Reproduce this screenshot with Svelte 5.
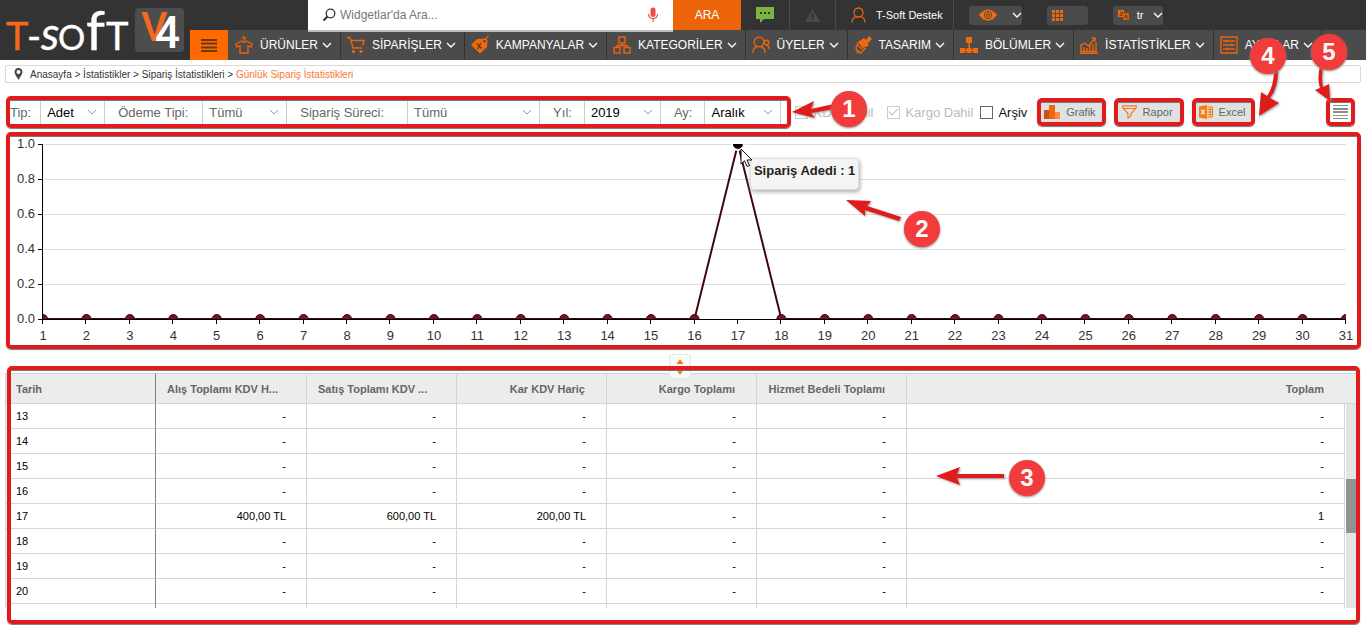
<script>
  const nav = [
    { label: 'ÜRÜNLER', icon: 'shirt' },
    { label: 'SİPARİŞLER', icon: 'cart' },
    { label: 'KAMPANYALAR', icon: 'tag' },
    { label: 'KATEGORİLER', icon: 'boxes' },
    { label: 'ÜYELER', icon: 'users' },
    { label: 'TASARIM', icon: 'brush' },
    { label: 'BÖLÜMLER', icon: 'tree' },
    { label: 'İSTATİSTİKLER', icon: 'stats' },
    { label: 'AYARLAR', icon: 'sliders' }
  ];

  const filters = [
    { id: 'tip', label: 'Tip:', value: 'Adet', size: 'w63', strong: true },
    { id: 'odeme', label: 'Ödeme Tipi:', value: 'Tümü', size: 'w83' },
    { id: 'surec', label: 'Sipariş Süreci:', value: 'Tümü', size: 'w131' },
    { id: 'yil', label: 'Yıl:', value: '2019', size: 'w75', strong: true },
    { id: 'ay', label: 'Ay:', value: 'Aralık', size: 'w75', strong: true }
  ];

  const checks = [
    { id: 'kdv', label: 'KDV Dahil', checked: true, disabled: true },
    { id: 'kargo', label: 'Kargo Dahil', checked: true, disabled: true },
    { id: 'arsiv', label: 'Arşiv', checked: false, disabled: false }
  ];

  const columns = [
    { label: 'Alış Toplamı KDV H...', cut: true },
    { label: 'Satış Toplamı KDV ...', cut: true },
    { label: 'Kar KDV Hariç' },
    { label: 'Kargo Toplamı' },
    { label: 'Hizmet Bedeli Toplamı' },
    { label: 'Toplam' }
  ];
  const empty = ['-', '-', '-', '-', '-', '-'];
  const rows = [13, 14, 15, 16, 17, 18, 19, 20].map((day) => ({
    day,
    cells: day === 17 ? ['400,00 TL', '600,00 TL', '200,00 TL', '-', '-', '1'] : empty
  }));

  // Orders per day of the month
  const orders = Array.from({ length: 31 }, (_, i) => (i + 1 === 17 ? 1 : 0));
  const levels = [1, 0.8, 0.6, 0.4, 0.2, 0];
  const left = 33;
  const top = 8;
  const plot = 175;
  let width = $state(1347);
  const step = $derived((width - left - 11) / 30);
  const px = (i) => left + i * step;
  const py = (v) => top + (1 - v) * plot;
</script>

{#snippet chevron()}
  <svg class="chev" viewBox="0 0 10 6" aria-hidden="true"><path d="M1 1l4 4 4-4" /></svg>
{/snippet}

{#snippet navIcon(name)}
  <svg class="ico" viewBox="0 0 18 18" aria-hidden="true">
    {#if name === 'shirt'}
      <path d="M9 5V3.600c1.800-.6 1.200-2.600-.1-2.600-1 0-1.400.6-1.400 1.300M6.500 5L.8 8l1.200 2.800 3-1V17h8V9.800l3 1L17.200 8l-5.700-3L9 6.500z" />
    {:else if name === 'cart'}
      <path d="M0 1.500h3l3 10.500h9M4.500 4.500H17l-1.500 5" />
      <circle class="solid" cx="6.500" cy="15.500" r="1.500" /><circle class="solid" cx="14" cy="15.500" r="1.500" />
    {:else if name === 'tag'}
      <path class="solid" d="M0 9l6-6 9-.5 1.500 2L16 11l-7 6.500z" />
      <path d="M13 4.500L17.500 0" />
      <path class="cut" d="M6 7.500l4.500 5M10 7l-3.500 6" />
      <circle class="hole" cx="13.500" cy="5.200" r="1.300" />
    {:else if name === 'boxes'}
      <path d="M6 1h6v6H6zM1 11.500h6V17H1zM11 11.500h6V17h-6zM9 7v2.500M4 11.500v-2h10v2" />
    {:else if name === 'users'}
      <circle cx="7" cy="6" r="4.800" /><path d="M.8 17c0-3.500 1.500-5.500 4-6.500M13.200 17c0-3.500-1.500-5.500-4-6.500" />
      <circle cx="14.500" cy="6.500" r="2.200" /><path d="M14 9c2 .5 3.300 2 3.300 4.500" />
    {:else if name === 'brush'}
      <path class="solid" d="M4 6l6-4 2 2 3-4 3 3-4 4 .5 3-6 2z" />
      <path d="M4 6.500L2 12l1.500 4.500 1.200-1.500 1.800 2.500 5-5.500M3 8.500l5.500 5" />
    {:else if name === 'tree'}
      <path class="solid" d="M6 1h6v6H6zM8.500 7h1.500v6H8.500zM0 12h5v5H0zM6.500 12h5v5h-5zM13 12h5v5h-5zM2 13.500h14v1.500H2z" />
    {:else if name === 'stats'}
      <path d="M1 8v7.500h15V6M4 15v-4M7 15v-3M10 15V9.500M13 15V8M1 9.500L4.500 7l4 3L15 2.500M11.500 2H15v3.500M0 17.300h18" />
    {:else}
      <path d="M1 1h16v16H1zM3 5h12M3 9h12M3 13h12M6 3.500v3M12 7.500v3M7 11.500v3" />
    {/if}
  </svg>
{/snippet}

<div class="page">
  <header>
    <a class="logo" href="#home" aria-label="T-soft V4">
      <svg viewBox="0 0 190 60">
        <g class="word">
          <text class="hot" x="6" y="50" font-size="38">T</text>
          <text x="27" y="50" font-size="38">-</text>
          <text class="slant" x="41" y="50" font-size="46">s</text>
          <text x="58" y="50" font-size="34">O</text>
          <text x="86" y="50" font-size="54">f</text>
          <text x="106" y="50" font-size="38">T</text>
        </g>
        <rect x="135" y="8" width="49" height="44" rx="4" fill="#4d4d4d" />
        <g class="mark">
          <text class="hot" x="141" y="41" font-size="41">V</text>
          <text x="155" y="48" font-size="44">4</text>
        </g>
      </svg>
    </a>

    <div class="topbar">
      <form class="search" role="search">
        <label for="q">
          <svg width="14" height="14" viewBox="0 0 14 14" aria-label="Ara">
            <circle cx="8.500" cy="5.500" r="4.300" fill="none" stroke="#333" stroke-width="1.300" />
            <path d="M5.500 8.500L1.500 12.500" stroke="#333" stroke-width="2" />
          </svg>
        </label>
        <input id="q" type="text" placeholder="Widgetlar'da Ara..." />
        <button type="button" class="mic" aria-label="Sesli arama">
          <svg width="12" height="16" viewBox="0 0 12 16">
            <rect x="3.500" y="0.500" width="5" height="9.500" rx="2.500" fill="#f04a4a" />
            <path d="M1.500 7c0 6 9 6 9 0M6 11.500V15" fill="none" stroke="#f04a4a" stroke-width="1.200" />
          </svg>
        </button>
      </form>
      <button type="button" class="go">ARA</button>
      <button type="button" class="cell c48" aria-label="Mesajlar">
        <svg width="18" height="16" viewBox="0 0 18 16">
          <path d="M0 0h18v12H8l-4 4v-4H0z" fill="#7cb342" />
          <path d="M4 5h2v2H4zM8 5h2v2H8zM12 5h2v2h-2z" fill="#2c3e1a" />
        </svg>
      </button>
      <button type="button" class="cell c46" aria-label="Uyarılar">
        <svg width="15" height="13" viewBox="0 0 15 13">
          <path d="M7.500 0L15 13H0z" fill="#4a4a4a" />
          <path d="M6.800 4h1.500v4.500H6.800zM6.800 9.500h1.500V11H6.800z" fill="#2c2c2c" />
        </svg>
      </button>
      <a class="cell support" href="#destek">
        <svg width="15" height="16" viewBox="0 0 15 16" fill="none" stroke="#eb640a" stroke-width="1.300">
          <circle cx="7.500" cy="5.500" r="4.500" /><path d="M1 15.500c0-3 1.500-5 4-6M14 15.500c0-3-1.500-5-4-6" />
        </svg>
        <span>T-Soft Destek</span>
      </a>
      <div class="tools">
        <button type="button" class="tool t53" aria-label="Görünüm">
          <svg width="18" height="12" viewBox="0 0 18 12">
            <path d="M0 6c5-7.500 13-7.500 18 0-5 7.500-13 7.500-18 0z" fill="#f06a0c" />
            <circle cx="9" cy="6" r="3.600" fill="none" stroke="#4b4b4b" /><circle cx="9" cy="6" r="1.400" fill="none" stroke="#4b4b4b" />
          </svg>
          {@render chevron()}
        </button>
        <button type="button" class="tool t41" aria-label="Uygulamalar">
          <svg width="11" height="11" viewBox="0 0 11 11">
            <path d="M0 0h3v3H0zM4 0h3v3H4zM8 0h3v3H8zM0 4h3v3H0zM4 4h3v3H4zM8 4h3v3H8zM0 8h3v3H0zM4 8h3v3H4zM8 8h3v3H8z" fill="#f06a0c" />
          </svg>
        </button>
        <button type="button" class="tool t50">
          <svg width="11" height="10" viewBox="0 0 11 10">
            <path d="M0 0h6v7H0z" fill="#f06a0c" /><path d="M5 3h6v7H5z" fill="#d75a08" />
            <path d="M2 2h2.500v2H2v1.500h2.500M6.500 8.500l1.500-3.500 1.500 3.500" fill="none" stroke="#5a3216" stroke-width=".8" />
          </svg>
          <span>tr</span>
          {@render chevron()}
        </button>
      </div>
    </div>

    <nav>
      <button type="button" class="burger" aria-label="Menü">
        <svg width="16" height="13" viewBox="0 0 16 13"><path d="M0 0h16v2H0zM0 3.500h16v2H0zM0 7.500h16v2H0zM0 11h16v2H0z" fill="#6b3a14" /></svg>
      </button>
      {#each nav as item}
        <a href="#{item.icon}">
          {@render navIcon(item.icon)}
          <span>{item.label}</span>
          {@render chevron()}
        </a>
      {/each}
    </nav>
  </header>

  <main>
    <div class="crumbs">
      <svg width="9" height="12" viewBox="0 0 9 12" aria-hidden="true">
        <path d="M4.500 0C2 0 .5 1.800.5 4c0 2.500 2.500 4.500 4 8 1.500-3.500 4-5.500 4-8 0-2.200-1.500-4-4-4zm0 6a2 2 0 110-4 2 2 0 010 4z" fill="#444" />
      </svg>
      <span><a href="#a">Anasayfa</a> &gt; <a href="#b">İstatistikler</a> &gt; <a href="#c">Sipariş İstatistikleri</a> &gt; <b>Günlük Sipariş İstatistikleri</b></span>
    </div>

    <div class="toolbar">
      <div class="filters framed">
        {#each filters as f}
          <label class="name n-{f.id}" for={f.id}>{f.label}</label>
          <div class="pick {f.size}" class:strong={f.strong}>
            <select id={f.id}><option>{f.value}</option></select>
            {@render chevron()}
          </div>
        {/each}
      </div>
      <div class="checks">
        {#each checks as c}
          <label class:off={c.disabled}>
            <input type="checkbox" checked={c.checked} disabled={c.disabled} />{c.label}
          </label>
        {/each}
      </div>
      <div class="actions">
        <button type="button" class="framed">
          <svg width="17" height="15" viewBox="0 0 17 15"><path d="M0 5h5v9H0z" fill="#c4531a" /><path d="M5 0h6v14H5z" fill="#f2660f" /><path d="M11 7h5v7h-5z" fill="#ff8a45" /></svg>
          Grafik
        </button>
        <button type="button" class="framed">
          <svg width="15" height="14" viewBox="0 0 15 14" fill="none" stroke="#f47a20" stroke-width="1.200"><path d="M.8.8h13.400v2L9 8.500V11l-3 2.200V8.500L.8 2.800zM2 3.500h11" /></svg>
          Rapor
        </button>
        <button type="button" class="framed">
          <svg width="14" height="14" viewBox="0 0 14 14">
            <path d="M0 1.500L8 0v14L0 12.500z" fill="#f47a10" /><path d="M2.200 4.500l3.600 5M5.800 4.500l-3.600 5" stroke="#fff" stroke-width="1.200" />
            <path d="M8.500 2h5v10h-5M8.500 4.500h5M8.500 7h5M8.500 9.500h5M11 2v10" fill="none" stroke="#f47a10" />
          </svg>
          Excel
        </button>
      </div>
      <button type="button" class="list framed" aria-label="Liste">
        <svg width="15" height="14" viewBox="0 0 15 14"><path d="M0 0h15v1H0zM0 3h15v2H0zM0 6h15v2H0zM0 10h15v1H0zM0 13h15v1H0z" fill="#8d8d8d" /></svg>
      </button>
    </div>

    <section class="chart framed" bind:clientWidth={width}>
      <svg width="100%" height="209" role="img" aria-label="Sipariş Adedi">
        <defs>
          <clipPath id="plot"><rect x={left} y={top} width={step * 30} height={plot} /></clipPath>
        </defs>
        {#each levels as v}
          {#if v > 0}<path class="grid" d="M{left} {Math.round(py(v)) + 0.5}H{px(30)}" />{/if}
          <path class="axis" d="M{left - 5} {Math.round(py(v)) + 0.5}H{left}" />
          <text x={left - 8} y={py(v) + 4} text-anchor="end">{v.toFixed(1)}</text>
        {/each}
        <path class="axis" d="M{left - 0.5} {top}V{top + plot}M{left - 1} {top + plot + 0.5}H{px(30)}" />
        <g clip-path="url(#plot)">
          <polyline class="series" points={orders.map((v, i) => `${px(i)},${py(v)}`).join(' ')} />
          {#each orders as v, i}
            <circle class:peak={v === 1} cx={px(i)} cy={py(v)} r={v ? 6 : 4.5} />
          {/each}
        </g>
        {#each orders as _, i}
          <path class="axis" d="M{Math.round(px(i)) - 0.5} {top + plot}v5" />
          <text x={px(i)} y={top + plot + 21} text-anchor="middle">{i + 1}</text>
        {/each}
      </svg>
      <div class="bubble" style:left="{px(16) + 12}px">Sipariş Adedi : 1</div>
      <svg class="pointer" style:left="{px(16) + 2}px" width="14" height="20" viewBox="0 0 14 20" aria-hidden="true">
        <path d="M1 1v15l3.500-3.300L7 18.500l2.500-1L7 12h5z" fill="#fff" stroke="#111" />
      </svg>
    </section>

    <div class="split">
      <button type="button" aria-label="Boyutlandır">
        <svg width="8" height="18" viewBox="0 0 8 18"><path d="M4 1l3.500 5H0.500zM4 17l3.500-5H0.500z" fill="#f97a1c" /></svg>
      </button>
    </div>

    <section class="report framed">
      <table>
        <colgroup><col class="first" /><col class="second" /><col class="mid" /><col class="mid" /><col class="mid" /><col class="mid" /><col /><col class="gutter" /></colgroup>
        <thead>
          <tr>
            <th class="day">Tarih</th>
            {#each columns as c}<th class:cut={c.cut}>{c.label}</th>{/each}
            <th></th>
          </tr>
        </thead>
        <tbody>
          {#each rows as r, i}
            <tr>
              <td class="day">{r.day}</td>
              {#each r.cells as c}<td>{c}</td>{/each}
              {#if i === 0}<td class="scroll" rowspan="9"><i></i></td>{/if}
            </tr>
          {/each}
          <tr class="tail"><td class="day"></td>{#each columns as _}<td></td>{/each}</tr>
        </tbody>
      </table>
    </section>
  </main>

  <svg class="notes" aria-hidden="true">
    <g class="arrow">
      <path d="M792 112L814 101 811 109 834 104V109L811 113 815 118z" />
      <path d="M846 200L871 201 867 206 901 217 899 221 865 210 865 216z" />
      <path d="M936 476L960 467 957 474H1004V478H957L960 485z" />
      <path d="M1274 70H1278Q1278 88 1270 98L1279 103 1259 116 1261 92 1267 96Q1274 86 1274 70z" />
      <path d="M1320 66H1323Q1321 80 1323 87L1329 84 1330 101 1315 90 1320 88Q1317 78 1320 66z" />
    </g>
    {#each [[849, 109], [922, 229], [1027, 478], [1268, 56], [1329, 52]] as [x, y], i}
      <circle cx={x} cy={y} r="18" />
      <text {x} y={y + 8}>{i + 1}</text>
    {/each}
  </svg>
</div>

<style>
  :global(body) { background: #fff; }
  .page { position: relative; min-height: 100vh; font-family: "Liberation Sans", Arial, sans-serif; font-size: 12px; color: #333; }
  button, input, select { font: inherit; color: inherit; border: 0; padding: 0; margin: 0; background: none; }
  button { cursor: pointer; }
  a { color: inherit; text-decoration: none; }
  svg { display: block; flex: none; }
  .chev { width: 10px; height: 6px; fill: none; stroke: currentColor; stroke-width: 1.300; }

  header { display: grid; grid-template: 30px 30px / 190px minmax(0, 1fr); background: #333; color: #fff; }
  .logo { grid-row: 1 / 3; }
  .logo svg { width: 190px; height: 60px; }
  .logo text { fill: #fff; }
  .word { font-family: Lato, sans-serif; font-weight: 400; }
  .word text { stroke: #fff; stroke-width: 0.4; }
  .slant { font-style: italic; }
  .mark { font-family: Roboto, sans-serif; font-weight: 500; }
  .logo .hot { fill: #f56a1a; }
  .word .hot { stroke: #f56a1a; }

  .topbar { display: flex; padding-left: 118px; }
  .search { display: flex; align-items: center; flex: 0 1 365px; min-width: 0; height: 30px; background: #fff; box-shadow: 0 2px 0 #bbb; z-index: 1; padding: 0 14px; gap: 4px; box-sizing: border-box; }
  .search input { flex: 1; min-width: 0; height: 28px; color: #333; outline: 0; }
  .search input::placeholder { color: #777; opacity: 1; }
  .go { width: 68px; background: #eb640a; }
  .cell { display: flex; align-items: center; justify-content: center; border-right: 1px solid #4b4b4b; }
  .c48 { width: 49px; }
  .c46 { width: 46px; }
  .support { padding: 0 10px 0 15px; gap: 10px; font-size: 11px; }
  .tools { display: flex; align-items: center; gap: 25px; margin-left: 15px; }
  .tool { display: flex; align-items: center; height: 19px; border-radius: 3px; background: #4b4b4b; font-size: 11px; }
  .tool .chev { margin-left: auto; }
  .t53 { width: 53px; padding-left: 10px; }
  .t41 { width: 41px; padding-left: 5px; }
  .t50 { width: 50px; padding-left: 5px; gap: 8px; }

  nav { display: flex; background: #4b4b4b; }
  .burger { display: flex; align-items: center; justify-content: center; width: 38px; background: #ff6a00; }
  nav a { display: flex; align-items: center; padding: 0 8px 0 6px; border-right: 1px solid #333; white-space: nowrap; }
  nav a:first-of-type { padding-left: 7px; }
  nav a .chev { margin-left: 4px; }
  .ico { width: 18px; height: 18px; margin-right: 7px; fill: none; stroke: #eb640a; stroke-width: 1.400; }
  .ico .solid { fill: #f06a0c; stroke: none; }
  .ico .cut { stroke: #6b3a14; }
  .ico .hole { fill: #4b4b4b; stroke: none; }

  main { padding: 5px 5px 0; }
  .crumbs { display: flex; align-items: center; gap: 7px; height: 16px; padding: 0 8px; border: 1px solid #d9d9d9; border-radius: 2px; font-size: 10px; white-space: nowrap; }
  .crumbs b { font-weight: 400; color: #f47a30; }

  .framed { position: relative; }
  .framed::after { content: ""; position: absolute; inset: -4px; border: 4px solid #df1b1b; border-radius: 5px; box-shadow: 0 1px 1px #777, inset 0 1px 0 #777; pointer-events: none; z-index: 2; }

  .toolbar { display: flex; align-items: center; margin-top: 17px; padding: 0 10px 0 5px; height: 24px; font-size: 13px; white-space: nowrap; }
  .filters { display: flex; align-items: stretch; height: 24px; padding-right: 6px; color: #666; }
  .name { display: flex; align-items: center; padding: 0 14px 0 13px; border-right: 1px solid #ccc; }
  .n-tip { padding: 0 9px 0 0; }
  .n-surec { padding-right: 23px; }
  .n-yil, .n-ay { padding-right: 12px; }
  .pick { display: grid; align-items: center; border-right: 1px solid #ccc; }
  .pick > * { grid-area: 1 / 1; }
  .pick select { width: 100%; height: 24px; padding-left: 6px; appearance: none; outline: 0; }
  .pick .chev { justify-self: end; margin-right: 7px; stroke: #999; stroke-width: 1; pointer-events: none; }
  .strong select { color: #000; }
  .w63 { width: 63px; }
  .w83 { width: 83px; }
  .w131 { width: 131px; }
  .w75 { width: 75px; }

  .checks { display: flex; gap: 7px; margin-left: 8px; color: #111; }
  .checks label { display: flex; align-items: center; gap: 5px; }
  .checks label:first-child { margin-right: 7px; }
  .checks .off { color: #bbb; }
  .checks input { appearance: none; width: 13px; height: 13px; border: 1px solid #666; background: #fff; display: grid; place-items: center; }
  .checks .off input { border-color: #ccc; }
  .checks input:checked::before { content: ""; width: 8px; height: 4px; border: solid #bbb; border-width: 0 0 1px 1px; rotate: -45deg; margin-bottom: 3px; }

  .actions { display: flex; gap: 16px; margin-left: 14px; }
  .actions button { display: flex; align-items: center; gap: 5px; height: 20px; padding: 0 6px 0 3px; background: #e1e1e1; color: #666; font-size: 11px; }
  .actions button:nth-child(2) { padding: 0 7px 0 4px; gap: 6px; }
  .actions button:nth-child(3) { gap: 6px; }
  .list { margin-left: auto; display: grid; place-items: center; width: 21px; height: 20px; }

  .chart { margin: 12px 4px 0 5px; }
  .chart text { font-size: 13px; fill: #333; }
  .grid { stroke: #ddd; }
  .axis { stroke: #000; fill: none; }
  .series { fill: none; stroke: #3f0713; stroke-width: 2; }
  .chart circle { fill: #7a0f22; stroke: #3f0713; }
  .chart circle.peak { fill: #000; stroke: #fff; stroke-width: 2; }
  .bubble { position: absolute; top: 22px; height: 18px; padding: 4px 3px 8px 3px; background: #f4f4f4; border: 1px solid #ddd; border-radius: 4px; box-shadow: 1px 2px 4px #aaa; color: #222; font-size: 13px; font-weight: 700; white-space: nowrap; }
  .pointer { position: absolute; top: 12px; }

  .split { display: flex; justify-content: center; margin-top: 9px; margin-right: 6px; }
  .split button { display: grid; place-items: center; width: 22px; height: 25px; background: #fafafa; border: 1px solid #e6e6e6; border-radius: 3px; z-index: 1; }

  .report { margin: -6px 4px 0 0; padding-bottom: 12px; }
  .report::after { inset: -7px -3px -4px 2px; }
  table { width: 100%; table-layout: fixed; border-collapse: separate; border-spacing: 0; font-size: 11px; color: #000; }
  .first, .second { width: 151px; }
  .mid { width: 150px; }
  .gutter { width: 12px; }
  th { height: 29px; padding: 0 21px 0 11px; border: solid #d5d5d5; border-width: 1px 1px 1px 0; background: #ececec; color: #666; text-align: right; white-space: nowrap; }
  th.cut { text-align: left; padding-right: 0; }
  th:nth-last-child(2), th:last-child { border-right: 0; padding-left: 0; }
  th:last-child { padding: 0; }
  td { height: 24px; padding: 0 20px 0 0; border: solid #d5d5d5; border-width: 0 1px 1px 0; text-align: right; }
  th.day, td.day { padding: 0 0 0 10px; text-align: left; border-left: 1px solid #d5d5d5; border-right-color: #808080; }
  .tail td { height: 4px; border-bottom: 0; }
  td.scroll { position: relative; padding: 0; border: solid #fff; border-width: 0 0 0 1px; background: #e4e4e4; }
  td.scroll i { position: absolute; left: 0; right: 0; top: 37%; height: 26%; background: #929292; }

  .notes { position: absolute; inset: 0; width: 100%; height: 100%; pointer-events: none; z-index: 3; }
  .notes circle { fill: #f23b3b; filter: drop-shadow(0 1px 1px #888); }
  .arrow { fill: #df1b1b; filter: drop-shadow(1px 1px 1px #999); }
  .notes text { fill: #fff; font-size: 24px; font-weight: 700; text-anchor: middle; }
</style>
